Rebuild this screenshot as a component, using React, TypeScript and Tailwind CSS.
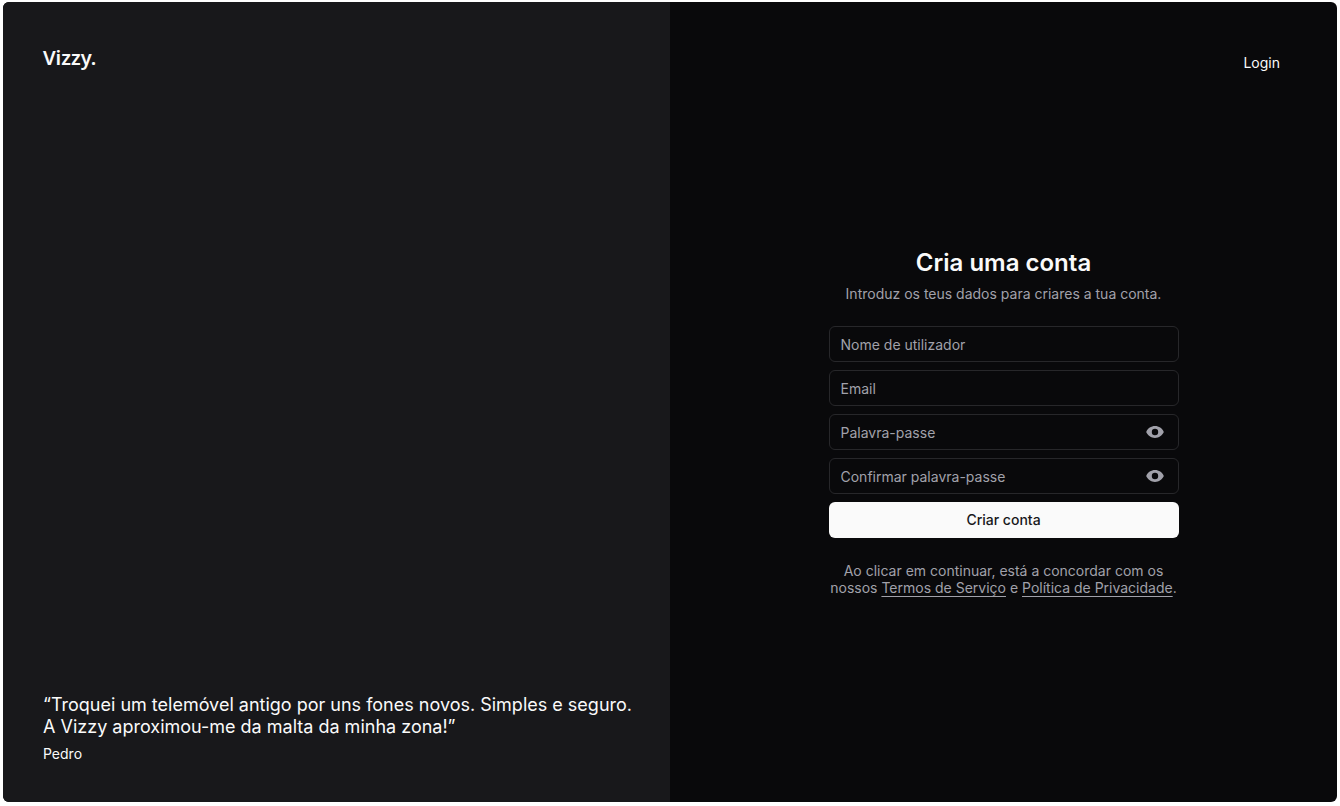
import { useState } from 'react';

const fieldClass =
  'block h-9 w-full rounded-md border border-[#27272a] bg-transparent px-[11px] text-sm text-[#fafafa] outline-none placeholder:text-[#a1a1aa] focus:border-[#71717a]';

function EyeIcon() {
  return (
    <svg viewBox="0 0 18 12" className="h-3 w-[18px]" fill="currentColor" aria-hidden="true">
      <path
        fillRule="evenodd"
        d="M9 0C5 0 1.900 2.400.4 5.400a1.300 1.300 0 0 0 0 1.200C1.900 9.600 5 12 9 12s7.100-2.400 8.600-5.400a1.300 1.300 0 0 0 0-1.200C16.100 2.400 13 0 9 0Zm0 9.200a3.200 3.200 0 1 0 0-6.400 3.200 3.200 0 0 0 0 6.400Z"
      />
    </svg>
  );
}

type FieldProps = { id: string; label: string; type?: string };

function Field({ id, label, type = 'text' }: FieldProps) {
  return <input id={id} name={id} type={type} aria-label={label} placeholder={label} className={fieldClass} />;
}

function PasswordField({ id, label }: FieldProps) {
  const [visible, setVisible] = useState(false);
  return (
    <div className="relative">
      <Field id={id} label={label} type={visible ? 'text' : 'password'} />
      <button
        type="button"
        aria-label={visible ? 'Ocultar' : 'Mostrar'}
        onClick={() => setVisible(!visible)}
        className="absolute inset-y-0 right-0 flex w-12 items-center justify-center text-[#a1a1aa]"
      >
        <EyeIcon />
      </button>
    </div>
  );
}

export default function App() {
  return (
    <div className="flex min-h-screen bg-white px-[3px] pt-[2px] pb-1 font-['Inter',sans-serif]">
      <div className="grid flex-1 grid-cols-2 overflow-hidden rounded-md bg-[#09090b] text-[#fafafa]">
        <aside className="flex flex-col justify-between bg-[#18181b] py-10 pr-8 pl-10">
          <p className="font-['Noto_Sans',sans-serif] text-xl leading-8 font-semibold">Vizzy.</p>
          <blockquote>
            <p className="text-lg leading-[22px]">
              “Troquei um telemóvel antigo por uns fones novos. Simples e seguro.
              <br />A Vizzy aproximou-me da malta da minha zona!”
            </p>
            <footer className="mt-2 text-sm leading-4">Pedro</footer>
          </blockquote>
        </aside>
        <main className="grid grid-rows-[1fr_auto_1fr] px-10">
          <nav className="flex items-start justify-end pt-[43px] pr-[17px]">
            <a href="#login" className="text-sm leading-9">Login</a>
          </nav>
          <section className="mx-auto flex w-full max-w-[350px] flex-col gap-6 pt-10 text-center">
            <header>
              <h1 className="text-2xl leading-[30px] font-semibold">Cria uma conta</h1>
              <p className="mt-2 text-sm leading-4 text-[#a1a1aa]">
                Introduz os teus dados para criares a tua conta.
              </p>
            </header>
            <form className="flex flex-col gap-2" onSubmit={(e) => e.preventDefault()}>
              <Field id="username" label="Nome de utilizador" />
              <Field id="email" label="Email" type="email" />
              <PasswordField id="password" label="Palavra-passe" />
              <PasswordField id="confirm" label="Confirmar palavra-passe" />
              <button type="submit" className="h-9 rounded-md bg-[#fafafa] text-sm font-medium text-[#18181b]">
                Criar conta
              </button>
            </form>
            <p className="text-sm leading-[17px] text-[#a1a1aa]">
              Ao clicar em continuar, está a concordar com os
              <br />
              nossos{' '}
              <a href="#termos" className="underline underline-offset-3">Termos de Serviço</a> e{' '}
              <a href="#privacidade" className="underline underline-offset-3">Política de Privacidade</a>.
            </p>
          </section>
        </main>
      </div>
    </div>
  );
}
